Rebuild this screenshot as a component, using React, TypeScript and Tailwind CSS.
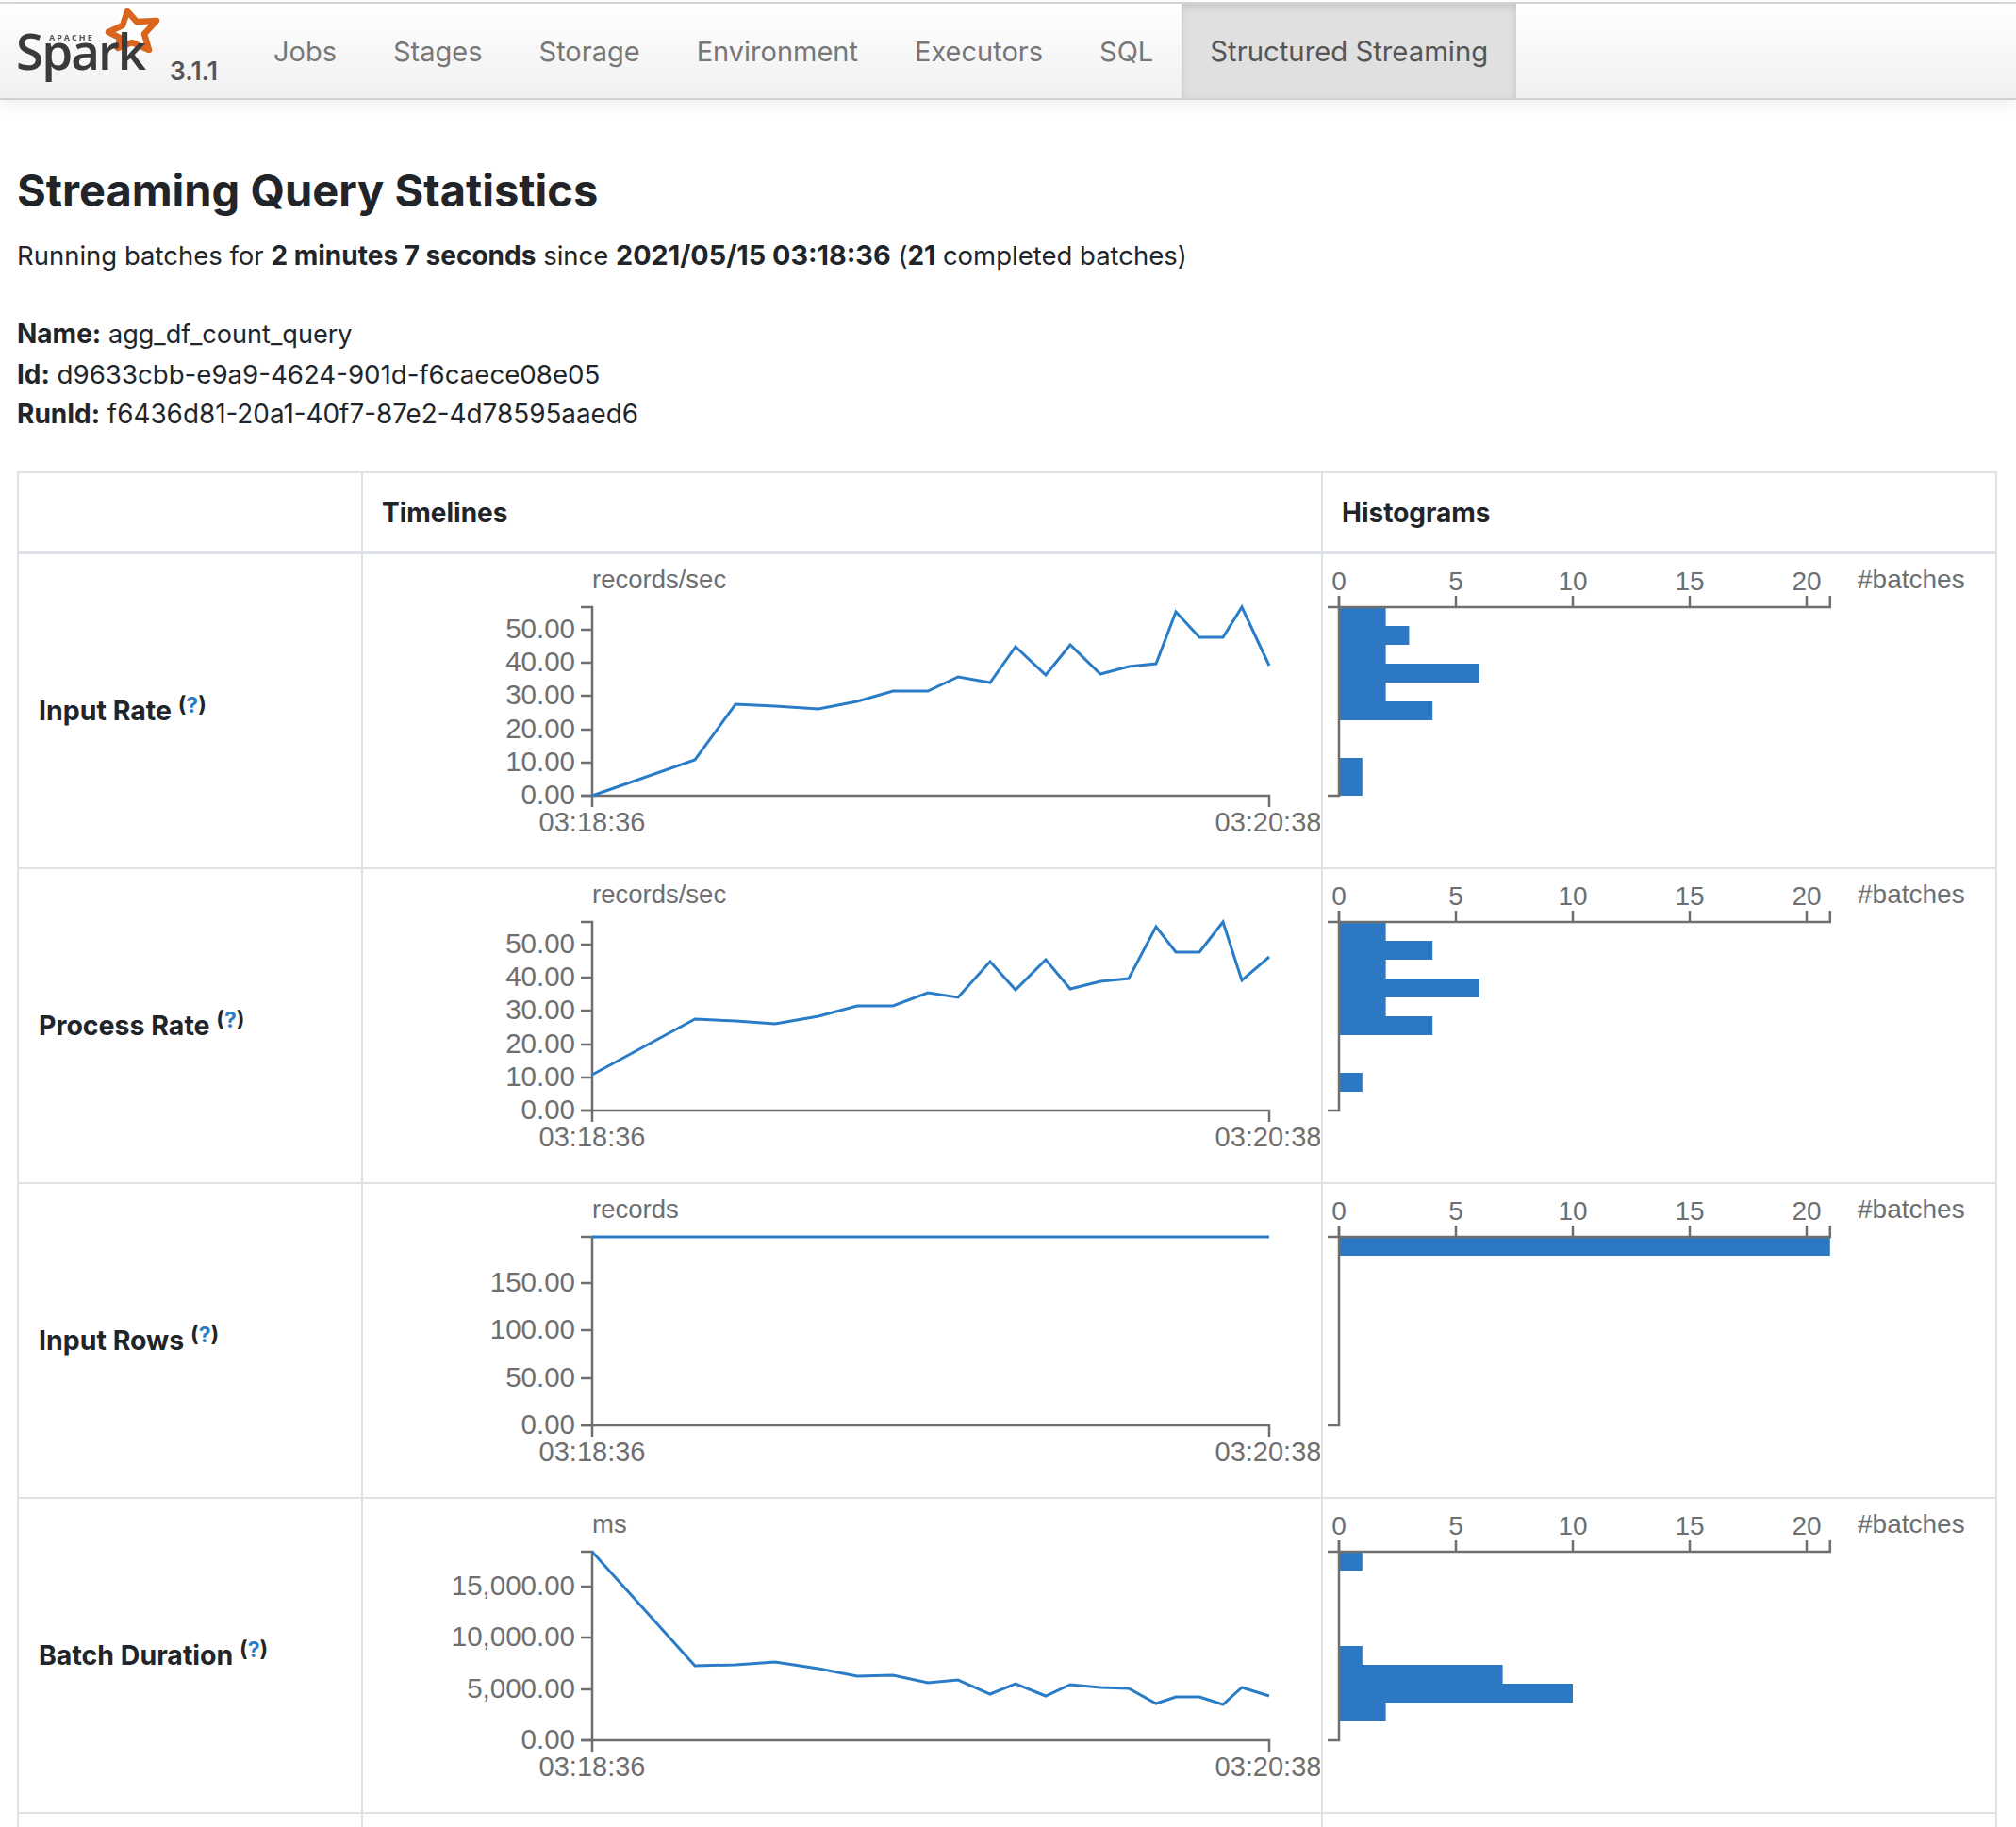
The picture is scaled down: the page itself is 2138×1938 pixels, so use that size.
const TIMES = [0, 109, 152, 194, 240, 281, 319, 356, 388, 422, 449, 481, 507, 539, 569, 598, 619, 644, 669, 689, 718];

type RowData = {
  label: string;
  unit: string;
  yTicks: [string, number][];
  line: number[];
  bars: number[];
};

const rows: RowData[] = [
  {
    label: "Input Rate",
    unit: "records/sec",
    yTicks: [["50.00", 24], ["40.00", 59], ["30.00", 94], ["20.00", 130], ["10.00", 165], ["0.00", 200]],
    line: [200, 162, 103, 105, 108, 100, 89, 89, 74, 80, 42, 72, 40, 71, 63, 60, 5, 32, 32, 0, 62],
    bars: [2, 3, 2, 6, 2, 4, 0, 0, 1, 1],
  },
  {
    label: "Process Rate",
    unit: "records/sec",
    yTicks: [["50.00", 24], ["40.00", 59], ["30.00", 94], ["20.00", 130], ["10.00", 165], ["0.00", 200]],
    line: [162, 103, 105, 108, 100, 89, 89, 75, 80, 42, 72, 40, 71, 63, 60, 5, 32, 32, 0, 62, 37],
    bars: [2, 4, 2, 6, 2, 4, 0, 0, 1, 0],
  },
  {
    label: "Input Rows",
    unit: "records",
    yTicks: [["150.00", 49], ["100.00", 99], ["50.00", 150], ["0.00", 200]],
    line: TIMES.map(() => 0),
    bars: [21, 0, 0, 0, 0, 0, 0, 0, 0, 0],
  },
  {
    label: "Batch Duration",
    unit: "ms",
    yTicks: [["15,000.00", 37], ["10,000.00", 91], ["5,000.00", 146], ["0.00", 200]],
    line: [0, 121, 120, 117, 124, 132, 131, 139, 136, 151, 140, 153, 141, 144, 145, 161, 154, 154, 162, 144, 153],
    bars: [1, 0, 0, 0, 0, 1, 7, 10, 2, 0],
  },
];

const axisText = "font-['Liberation_Sans',sans-serif] text-[28px] fill-[#6f6f6f]";
const unitText = "font-['Liberation_Sans',sans-serif] text-[27.5px] fill-[#6f6f6f]";
const tickText = "font-['Liberation_Sans',sans-serif] text-[29.5px] fill-[#6f6f6f]";
const timeText = "font-['Liberation_Sans',sans-serif] text-[29px] fill-[#6f6f6f]";
const AXIS = "#6f6f6f";

function Timeline({ row }: { row: RowData }) {
  const points = row.line.map((y, i) => `${TIMES[i]},${y}`).join(" ");
  return (
    <svg width={1015} height={332} className="block">
      <text x={243} y={36} className={unitText}>{row.unit}</text>
      <g transform="translate(243,56)">
        <path d="M-12,0H0V200H718V212M0,200H-12M0,200V212" fill="none" stroke={AXIS} strokeWidth={2.5} />
        {row.yTicks.map(([label, y]) => (
          <g key={label}>
            <line x1={-12} x2={0} y1={y} y2={y} stroke={AXIS} strokeWidth={2.5} />
            <text x={-18} y={y + 9} textAnchor="end" className={tickText}>{label}</text>
          </g>
        ))}
        <text x={0} y={238} textAnchor="middle" className={timeText}>03:18:36</text>
        <text x={717} y={238} textAnchor="middle" className={timeText}>03:20:38</text>
        <polyline points={points} fill="none" stroke="#2a7cc6" strokeWidth={3} />
      </g>
    </svg>
  );
}

function Histogram({ row }: { row: RowData }) {
  const unit = 24.8;
  return (
    <svg width={714} height={332} className="block">
      <g transform="translate(17,56)">
        {row.bars.map((n, i) =>
          n > 0 ? <rect key={i} x={0} y={i * 20} width={n * unit} height={20} fill="#2c78c2" /> : null
        )}
        <path d={`M-12,0H${21 * unit}V-12M0,-12V200H-12`} fill="none" stroke={AXIS} strokeWidth={2.5} />
        {[0, 5, 10, 15, 20].map((n) => (
          <g key={n}>
            <line x1={n * unit} x2={n * unit} y1={-12} y2={0} stroke={AXIS} strokeWidth={2.5} />
            <text x={n * unit} y={-18} textAnchor="middle" className={axisText}>{n}</text>
          </g>
        ))}
      </g>
      <text x={567} y={36} className={axisText}>#batches</text>
    </svg>
  );
}

function SparkLogo() {
  return (
    <svg width={175} height={96} className="block blur-[0.6px]">
      <path
        d="M135,8L145,19L166,18L153,32L158,49L140,41L125,47L127,36L115,30L130,23Z"
        fill="white"
        stroke="#d9651f"
        strokeWidth={6.5}
        strokeLinejoin="round"
      />
      <text x={17} y={70} className="font-['Open_Sans',sans-serif] text-[53px] font-semibold fill-[#3a3a3a] tracking-[-2px]">Spark</text>
      <text x={52} y={39} className="font-['Open_Sans',sans-serif] text-[9px] font-bold fill-[#555] tracking-[2px]">APACHE</text>
    </svg>
  );
}

export default function App() {
  const tabs = ["Jobs", "Stages", "Storage", "Environment", "Executors", "SQL"];
  return (
    <div className="h-[1938px] overflow-hidden bg-white font-[Inter,sans-serif] text-[27.5px] leading-[42px] text-[#212529]">
      <div className="mt-[2px] border-t-2 border-[#d8d8e0]" />
      <nav className="flex h-[102px] items-stretch border-b-2 border-[#d0d0d0] bg-linear-to-b from-white to-[#f0f0f0] shadow-[0_4px_16px_rgba(0,0,0,0.08)]">
        <div className="flex w-[260px] shrink-0 items-start">
          <SparkLogo />
          <span className="mt-[53px] ml-[5px] text-[26.5px] leading-[36px] font-semibold text-[#555]">3.1.1</span>
        </div>
        <div className="flex items-stretch text-[29px]">
          {tabs.map((t) => (
            <a key={t} className="flex items-center px-[30px] pt-[2px] text-[#777]">{t}</a>
          ))}
          <a className="flex items-center bg-[#e0e0e0] px-[30px] pt-[2px] text-[29.3px] text-[#555] shadow-[inset_0_3px_8px_rgba(0,0,0,0.13)]">
            Structured Streaming
          </a>
        </div>
      </nav>

      <main className="px-[18px]">
        <h3 className="mt-[66px] text-[47px] leading-[60px] font-bold">Streaming Query Statistics</h3>
        <p className="mt-[18px]">
          Running batches for <strong className="text-[28px]">2 minutes 7 seconds</strong> since <strong className="text-[28.8px]">2021/05/15 03:18:36</strong> (<strong className="text-[28px]">21</strong> completed batches)
        </p>
        <div className="mt-[41px]">
          <div><strong className="text-[28px]">Name:</strong> <span className="text-[27.1px]">agg_df_count_query</span></div>
          <div><strong className="text-[28px]">Id:</strong> <span className="text-[27.65px]">d9633cbb-e9a9-4624-901d-f6caece08e05</span></div>
          <div><strong className="text-[28px]">RunId:</strong> <span className="text-[27.85px]">f6436d81-20a1-40f7-87e2-4d78595aaed6</span></div>
        </div>

        <table className="mt-[40px] w-[2100px] table-fixed border-collapse text-[28px]">
          <colgroup>
            <col className="w-[365px]" />
            <col className="w-[1018px]" />
            <col />
          </colgroup>
          <thead>
            <tr className="h-[85px]">
              <th className="border-2 border-b-4 border-[#dee2e6]" />
              <th className="border-2 border-b-4 border-[#dee2e6] px-[20px] pt-[2px] text-left font-bold">Timelines</th>
              <th className="border-2 border-b-4 border-[#dee2e6] px-[20px] pt-[2px] text-left font-bold">Histograms</th>
            </tr>
          </thead>
          <tbody>
            {rows.map((row) => (
              <tr key={row.label} className="h-[334px]">
                <td className="border-2 border-[#dee2e6] px-[21px] align-middle text-[28.5px] font-bold">
                  {row.label}{" "}
                  <sup className="-top-[8px] text-[23px]">
                    (<span className="text-[#2a7cc6]">?</span>)
                  </sup>
                </td>
                <td className="overflow-hidden border-2 border-[#dee2e6] p-0 align-top">
                  <Timeline row={row} />
                </td>
                <td className="overflow-hidden border-2 border-[#dee2e6] p-0 align-top">
                  <Histogram row={row} />
                </td>
              </tr>
            ))}
            <tr className="h-[334px]">
              <td className="border-2 border-[#dee2e6]" />
              <td className="border-2 border-[#dee2e6]" />
              <td className="border-2 border-[#dee2e6]" />
            </tr>
          </tbody>
        </table>
      </main>
    </div>
  );
}
